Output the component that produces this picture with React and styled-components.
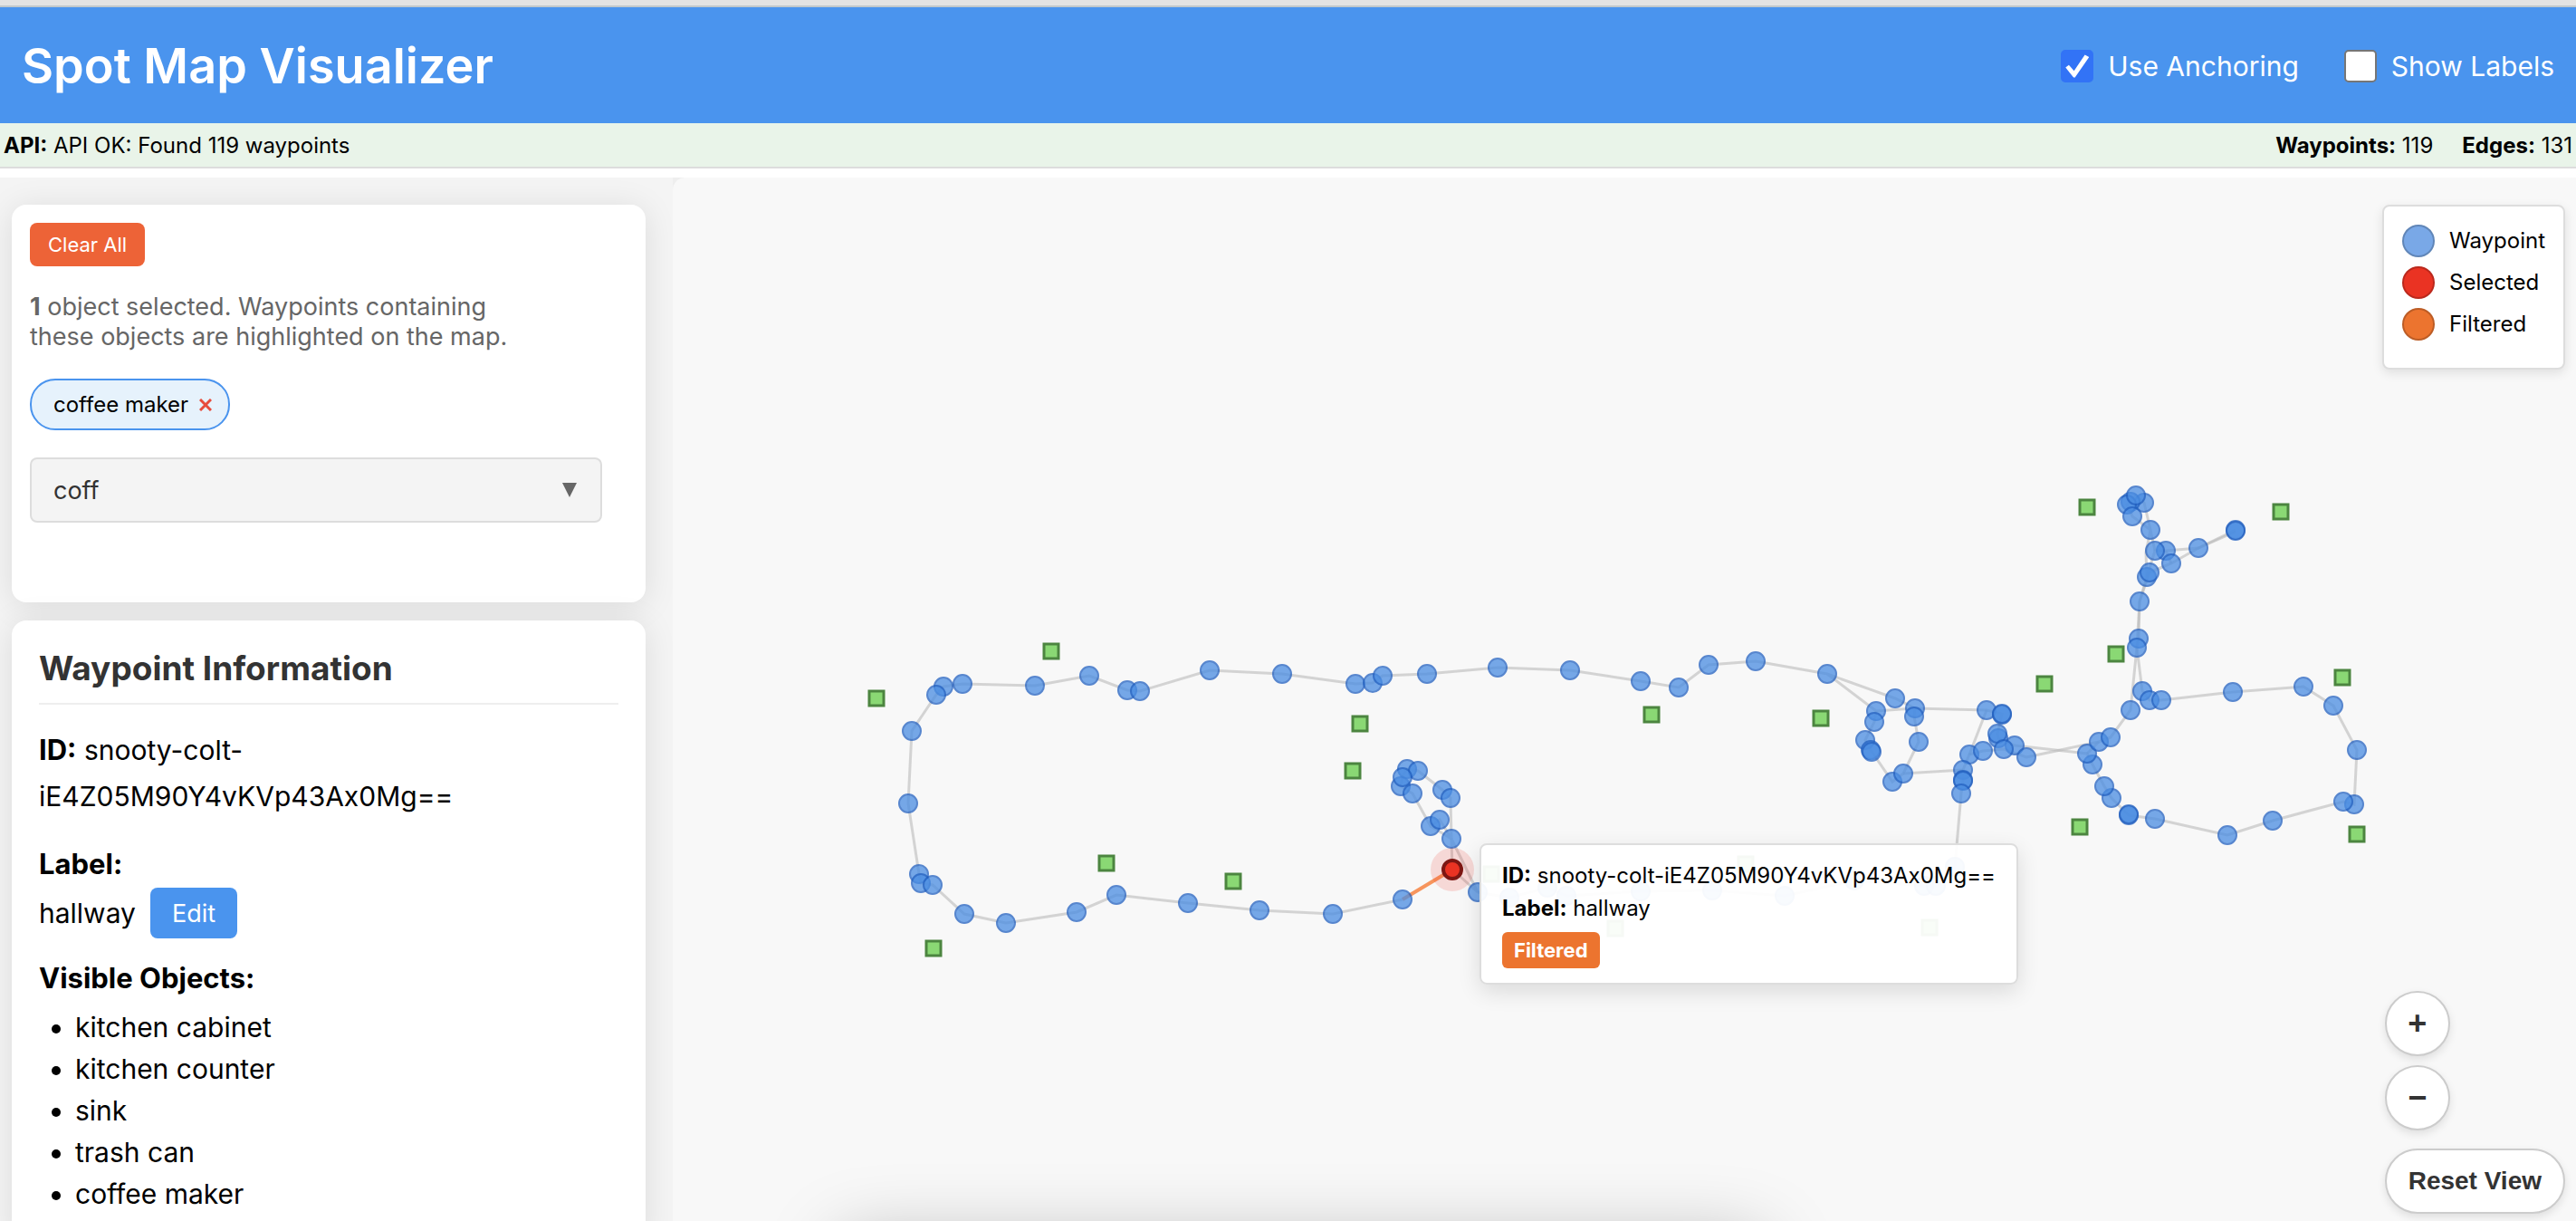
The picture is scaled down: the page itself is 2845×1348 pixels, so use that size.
import React, { useState } from 'react';
import styled, { createGlobalStyle, css } from 'styled-components';

const GlobalStyle = createGlobalStyle`
  *, *::before, *::after { box-sizing: border-box; }
  body {
    margin: 0;
    background: #fff;
    color: #000;
    font-family: Inter, "Liberation Sans", sans-serif;
    font-size: 30px;
  }
  button, input { font-family: inherit; }
`;

const Page = styled.div`
  display: flex;
  flex-direction: column;
  height: 100vh;
  overflow: hidden;
`;

const WindowEdge = styled.div`
  flex: none;
  height: 8px;
  background: #e3e3e3;
  border-bottom: 2px solid #c1c8cb;
`;

const Header = styled.header`
  flex: none;
  display: flex;
  align-items: center;
  justify-content: space-between;
  height: 128px;
  padding: 2px 24px 0;
  background: #4a94ee;
  color: #fff;
`;

const Title = styled.h1`
  margin: 0;
  font-size: 54px;
  font-weight: 600;
  line-height: 64px;
`;

const Options = styled.div`
  display: flex;
  gap: 50px;
`;

const Option = styled.label`
  display: flex;
  align-items: center;
  gap: 16px;
  line-height: 36px;
`;

const Checkbox = styled.input`
  appearance: none;
  display: grid;
  place-items: center;
  width: 36px;
  height: 36px;
  margin: 0;
  border: 2px solid #767676;
  border-radius: 5px;
  background: #fff;

  &:checked {
    border-color: #3273f6;
    background: #3273f6;
  }

  &:checked::after {
    content: '';
    width: 26px;
    height: 26px;
    background: #fff;
    clip-path: polygon(0 56%, 14% 45%, 36% 70%, 82% 2%, 100% 12%, 40% 98%, 34% 98%);
  }
`;

const StatusBar = styled.div`
  flex: none;
  display: flex;
  justify-content: space-between;
  margin-bottom: 10px;
  padding: 1px 4px 0;
  border-bottom: 2px solid #ddd;
  background: #e9f4e9;
  font-size: 24px;
  line-height: 47px;
`;

const Counts = styled.div`
  display: flex;
  gap: 32px;
`;

const Main = styled.main`
  flex: 1;
  display: grid;
  grid-template-columns: 743px 1fr;
  min-height: 0;
  background: #eee;
`;

const Sidebar = styled.aside`
  display: flex;
  flex-direction: column;
  gap: 20px;
  min-height: 0;
  padding: 30px 30px 0 13px;
  overflow: hidden;
  background: #f4f4f4;
`;

const Card = styled.section`
  flex: none;
  padding: ${(p) => (p.$filter ? '20px 48px 88px 20px' : '30px')};
  border-radius: 16px;
  background: #fff;
  box-shadow: 0 4px 36px rgba(0, 0, 0, 0.1);
`;

const ActionButton = styled.button`
  border: 0;
  border-radius: 8px;
  color: #fff;
  ${(p) =>
    p.$danger
      ? css`
          height: 48px;
          padding: 0 20px;
          background: #ed6337;
          font-size: 22px;
        `
      : css`
          height: 56px;
          padding: 0 24px;
          background: #4a94ee;
          font-size: 27px;
        `}
`;

const Hint = styled.p`
  max-width: 560px;
  margin: 28px 0 30px;
  color: #666;
  font-size: 27px;
  line-height: 33px;
`;

const Chips = styled.div`
  display: flex;
  margin-bottom: 30px;
`;

const Chip = styled.span`
  display: flex;
  align-items: center;
  gap: 12px;
  height: 57px;
  padding: 0 18px 0 24px;
  border: 2px solid #4a94ee;
  border-radius: 28px;
  background: #e6f2fc;
  font-size: 24px;
`;

const ChipRemove = styled.button`
  display: flex;
  padding: 0;
  border: 0;
  background: none;
  color: #e74c3c;
`;

const Combo = styled.div`
  display: flex;
  align-items: center;
  height: 72px;
  padding: 0 24px;
  border: 2px solid #ddd;
  border-radius: 8px;
  background: #f4f4f4;
`;

const ComboInput = styled.input`
  flex: 1;
  min-width: 0;
  padding: 0;
  border: 0;
  outline: 0;
  background: none;
  color: #333;
  font-size: 27px;
`;

const ComboToggle = styled.button`
  display: flex;
  padding: 2px;
  border: 0;
  background: none;
  color: #666;
`;

const CardTitle = styled.h2`
  margin: 0 0 24px;
  padding-bottom: 15px;
  border-bottom: 2px solid #eee;
  color: #333;
  font-size: 37px;
  font-weight: 700;
  line-height: 46px;
`;

const Field = styled.div`
  margin-bottom: ${(p) => (p.$tight ? '0' : '23px')};
  line-height: 51px;
  overflow-wrap: anywhere;
`;

const FieldName = styled.strong`
  font-size: 31px;
  font-weight: 700;
`;

const LabelRow = styled.div`
  display: flex;
  align-items: center;
  gap: 16px;
  margin-bottom: 18px;
`;

const ObjectList = styled.ul`
  margin: 5px 0 0;
  padding-left: 40px;
  line-height: 46px;
`;

const MapArea = styled.section`
  position: relative;
  overflow: hidden;
  border-top-left-radius: 14px;
  background: #f8f8f8;

  &::after {
    content: '';
    position: absolute;
    right: 895px;
    bottom: -120px;
    left: 182px;
    height: 100px;
    border-radius: 20px;
    box-shadow: 0 0 80px rgba(0, 0, 0, 0.26);
  }
`;

const Graph = styled.svg`
  position: absolute;
  inset: 0;
  width: 100%;
  height: 100%;
`;

const Legend = styled.ul`
  position: absolute;
  top: 30px;
  right: 12px;
  margin: 0;
  padding: 20px;
  border: 2px solid #ddd;
  border-radius: 8px;
  background: #fff;
  box-shadow: 0 4px 12px rgba(0, 0, 0, 0.1);
  font-size: 24px;
  line-height: 36px;
  list-style: none;
`;

const LegendItem = styled.li`
  display: flex;
  align-items: center;
  gap: 16px;
  margin-bottom: 10px;

  &::before {
    content: '';
    width: 36px;
    height: 36px;
    border: 2px solid rgba(0, 0, 0, 0.2);
    border-radius: 50%;
    background: ${(p) => p.$color};
  }
`;

const Controls = styled.div`
  position: absolute;
  right: 12px;
  bottom: 8px;
  display: flex;
  flex-direction: column;
  align-items: flex-start;
  gap: 10px;
`;

const MapButton = styled.button`
  height: 72px;
  border: 2px solid #ccc;
  border-radius: 36px;
  background: #fff;
  box-shadow: 0 4px 10px rgba(0, 0, 0, 0.1);
  color: #333;
  font-family: "Liberation Sans", Arial, sans-serif;
  font-weight: 700;
  ${(p) =>
    p.$wide
      ? css`
          margin-top: 10px;
          padding: 0 24px;
          font-size: 28px;
        `
      : css`
          width: 72px;
          padding: 0;
          font-size: 36px;
        `}
`;

const Tooltip = styled.div`
  position: absolute;
  top: 735px;
  left: 891px;
  padding: 16px 23px;
  border: 2px solid #ddd;
  border-radius: 8px;
  background: rgba(255, 255, 255, 0.95);
  box-shadow: 0 8px 24px rgba(0, 0, 0, 0.12);
  font-size: 24px;
  line-height: 36px;
  white-space: nowrap;
`;

const Badge = styled.span`
  display: block;
  width: fit-content;
  margin-top: 8px;
  padding: 0 13px;
  border-radius: 6px;
  background: #ec742f;
  color: #fff;
  font-size: 22px;
  font-weight: 700;
  line-height: 40px;
`;

const waypoints = [
  [1007, 807], [1003, 887], [1042, 758], [1034, 767], [1063, 755], [1143, 757], [1203, 746],
  [1245, 762], [1259, 763], [1336, 740], [1416, 744], [1497, 755], [1516, 754], [1527, 746],
  [1576, 744], [1654, 737], [1734, 740], [1812, 752], [1854, 759], [1887, 734], [1939, 730],
  [2018, 744], [1015, 965], [1017, 975], [1030, 977], [1065, 1009], [1111, 1019], [1189, 1007],
  [1233, 988], [1312, 997], [1391, 1005], [1472, 1009], [1549, 993],
  [1554, 849], [1566, 851], [1547, 868], [1549, 858], [1560, 876], [1593, 872],
  [1602, 881], [1580, 912], [1590, 905], [1603, 926], [1632, 985],
  [1667, 991], [1709, 980], [1730, 989], [1812, 984], [1891, 983], [1971, 989], [2048, 972],
  [2125, 978], [2138, 978], [2159, 957],
  [2093, 771], [2072, 785], [2070, 797], [2060, 817], [2066, 828], [2067, 830], [2115, 782],
  [2114, 791], [2119, 819], [2090, 863], [2102, 854],
  [2194, 784], [2211, 789], [2211, 788], [2207, 815], [2206, 810], [2225, 823], [2213, 827],
  [2238, 836], [2175, 833], [2190, 829], [2168, 850], [2168, 861], [2168, 862], [2166, 876],
  [2311, 844], [2305, 832], [2318, 819], [2331, 814], [2353, 784], [2366, 763], [2374, 773],
  [2387, 773], [2466, 764], [2544, 758], [2577, 779], [2603, 828], [2600, 888], [2588, 885],
  [2510, 906], [2460, 922], [2380, 904], [2351, 900], [2351, 899], [2332, 881], [2324, 868],
  [2362, 705], [2360, 715], [2363, 664], [2371, 637], [2374, 632], [2392, 608], [2380, 608],
  [2398, 622], [2428, 605], [2469, 585], [2469, 586], [2375, 585], [2368, 555], [2353, 554],
  [2349, 557], [2359, 547], [2355, 570],
];

const paths = [
  '1604,960 1603,926 1632,985 1604,960',
  '1549,993 1472,1009 1391,1005 1312,997 1233,988 1189,1007 1111,1019 1065,1009 1030,977 1017,975 1015,965 1003,887 1007,807 1034,767 1042,758 1063,755 1143,757 1203,746 1245,762 1259,763 1336,740 1416,744 1497,755 1516,754 1527,746 1576,744 1654,737 1734,740 1812,752 1854,759 1887,734 1939,730 2018,744 2093,771 2115,782 2072,785 2018,744',
  '1603,926 1602,881 1593,872 1566,851 1554,849 1549,857 1547,868 1560,876 1580,912 1590,905 1603,926 1580,912',
  '1632,985 1667,991 1709,980 1730,989 1812,984 1891,983 1971,989 2048,972 2125,978 2138,978 2159,957 2166,876 2168,861 2168,850 2175,833 2190,829 2213,827 2238,836 2318,819 2331,814 2353,784 2360,715',
  '2072,785 2070,797 2060,817 2066,828 2090,863 2102,854 2119,819 2114,791 2115,782 2194,784 2211,788 2206,810 2207,815 2225,823 2305,832 2311,844 2324,868 2332,881 2351,900 2380,904 2460,922 2510,906 2588,885 2600,888 2603,828 2577,779 2544,758 2466,764 2387,773 2374,773 2366,763 2360,715 2362,705 2363,664 2374,632 2398,622 2428,605 2469,585',
  '2102,854 2168,850', '2194,784 2175,833', '2305,832 2318,819',
  '2360,715 2363,664 2371,637 2380,608 2392,608 2428,605 2469,587',
  '2371,637 2370,610 2375,585 2368,555 2359,547 2353,554 2349,557 2355,570 2375,585 2380,608',
  '2392,608 2398,622',
];

const markers = [
  [968, 771], [1161, 719], [1502, 799], [1494, 851], [1222, 953], [1362, 973], [1031, 1047],
  [1824, 789], [2011, 793], [2258, 755], [2297, 913], [2337, 722], [2305, 560], [2519, 565],
  [2587, 748], [2603, 921], [1647, 965], [1928, 954], [1784, 1025], [2131, 1024],
];

const visibleObjects = ['kitchen cabinet', 'kitchen counter', 'sink', 'trash can', 'coffee maker'];

const legend = [
  ['Waypoint', '#79a8e7'],
  ['Selected', '#ea3323'],
  ['Filtered', '#ec742f'],
];

function MapGraph() {
  return (
    <Graph role="img" aria-label="Waypoint map">
      <g transform="translate(-743 -196)">
        <g fill="none" stroke="#bbb" strokeOpacity="0.6" strokeWidth="3">
          {paths.map((points) => (
            <polyline key={points} points={points} />
          ))}
        </g>
        <line x1="1549" y1="993" x2="1604" y2="960" stroke="#f7955d" strokeWidth="4" />
        {markers.map(([x, y]) => (
          <rect key={`${x}-${y}`} x={x - 8} y={y - 8} width="16" height="16" fill="#8ad874" stroke="#4c8540" strokeWidth="3" />
        ))}
        {waypoints.map(([x, y], i) => (
          <circle key={i} cx={x} cy={y} r="10" fill="#4a8de2" stroke="#2260c0" strokeWidth="2" opacity="0.75" />
        ))}
        <circle cx="1604" cy="960" r="24" fill="#ea3323" opacity="0.16" />
        <circle cx="1604" cy="960" r="10" fill="#ea3323" stroke="#7d1713" strokeWidth="4" />
      </g>
    </Graph>
  );
}

export default function App() {
  const [anchoring, setAnchoring] = useState(true);
  const [labels, setLabels] = useState(false);
  const [query, setQuery] = useState('coff');

  return (
    <Page>
      <GlobalStyle />
      <WindowEdge />
      <Header>
        <Title>Spot Map Visualizer</Title>
        <Options>
          <Option>
            <Checkbox type="checkbox" checked={anchoring} onChange={(e) => setAnchoring(e.target.checked)} />
            Use Anchoring
          </Option>
          <Option>
            <Checkbox type="checkbox" checked={labels} onChange={(e) => setLabels(e.target.checked)} />
            Show Labels
          </Option>
        </Options>
      </Header>
      <StatusBar>
        <div><strong>API:</strong> API OK: Found 119 waypoints</div>
        <Counts>
          <span><strong>Waypoints:</strong> 119</span>
          <span><strong>Edges:</strong> 131</span>
        </Counts>
      </StatusBar>
      <Main>
        <Sidebar>
          <Card $filter>
            <ActionButton $danger type="button">Clear All</ActionButton>
            <Hint><strong>1</strong> object selected. Waypoints containing these objects are highlighted on the map.</Hint>
            <Chips>
              <Chip>
                coffee maker
                <ChipRemove type="button" aria-label="Remove coffee maker">
                  <svg width="14" height="14" viewBox="0 0 14 14" stroke="currentColor" strokeWidth="3">
                    <path d="M1 1 13 13M13 1 1 13" />
                  </svg>
                </ChipRemove>
              </Chip>
            </Chips>
            <Combo>
              <ComboInput aria-label="Filter by object" value={query} onChange={(e) => setQuery(e.target.value)} />
              <ComboToggle type="button" aria-label="Show objects">
                <svg width="16" height="16" viewBox="0 0 16 16" fill="currentColor">
                  <path d="M0 0H16L8 16Z" />
                </svg>
              </ComboToggle>
            </Combo>
          </Card>
          <Card>
            <CardTitle>Waypoint Information</CardTitle>
            <Field><FieldName>ID:</FieldName> snooty-colt-<wbr />iE4Z05M90Y4vKVp43Ax0Mg==</Field>
            <Field $tight><FieldName>Label:</FieldName></Field>
            <LabelRow>
              hallway
              <ActionButton type="button">Edit</ActionButton>
            </LabelRow>
            <Field $tight><FieldName>Visible Objects:</FieldName></Field>
            <ObjectList>
              {visibleObjects.map((name) => (
                <li key={name}>{name}</li>
              ))}
            </ObjectList>
          </Card>
        </Sidebar>
        <MapArea>
          <MapGraph />
          <Legend>
            {legend.map(([name, color]) => (
              <LegendItem key={name} $color={color}>{name}</LegendItem>
            ))}
          </Legend>
          <Tooltip role="tooltip">
            <div><strong>ID:</strong> snooty-colt-iE4Z05M90Y4vKVp43Ax0Mg==</div>
            <div><strong>Label:</strong> hallway</div>
            <Badge>Filtered</Badge>
          </Tooltip>
          <Controls>
            <MapButton type="button" aria-label="Zoom in">+</MapButton>
            <MapButton type="button" aria-label="Zoom out">−</MapButton>
            <MapButton $wide type="button">Reset View</MapButton>
          </Controls>
        </MapArea>
      </Main>
    </Page>
  );
}
